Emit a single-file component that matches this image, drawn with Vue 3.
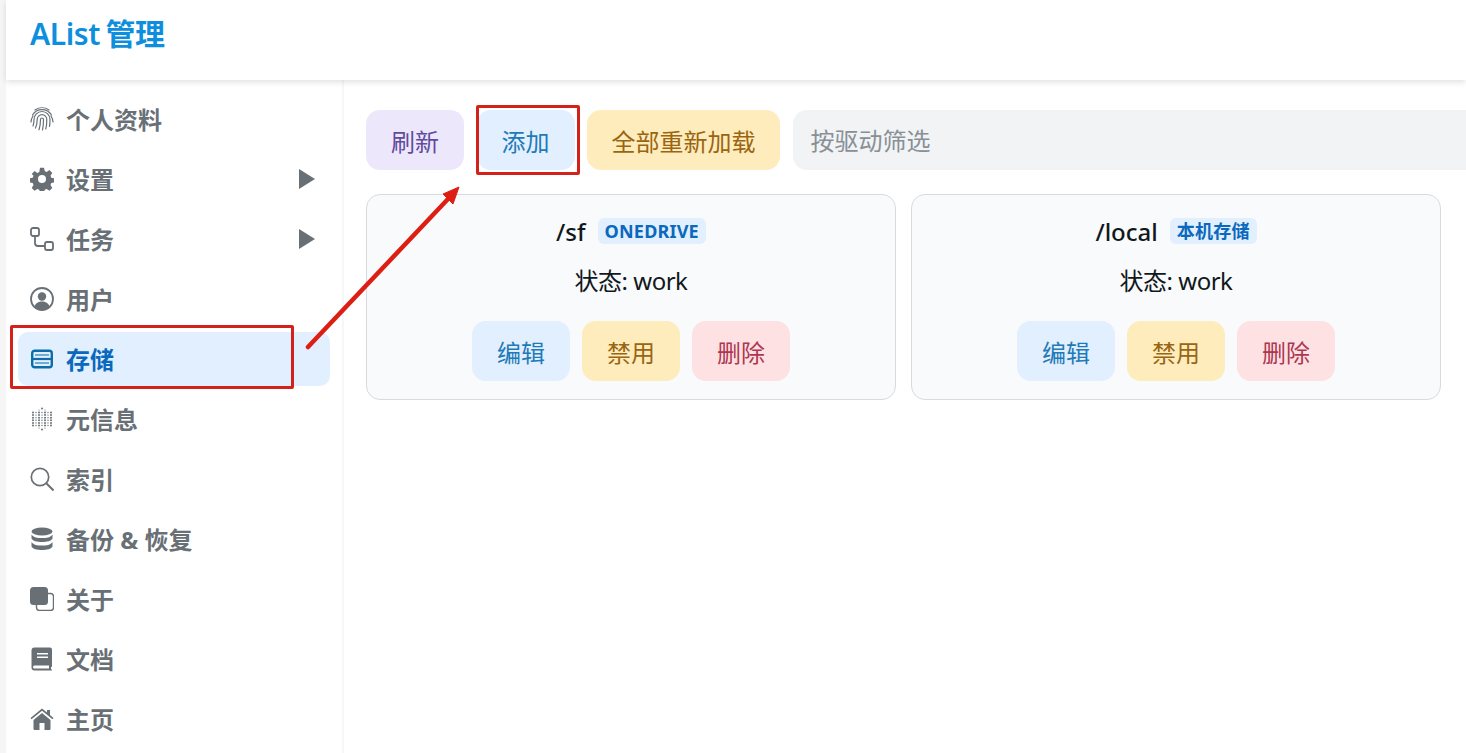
<script setup>
const menu = [
  { key: 'finger', label: '个人资料' },
  { key: 'gear', label: '设置', arrow: true },
  { key: 'route', label: '任务', arrow: true },
  { key: 'user', label: '用户' },
  { key: 'storage', label: '存储', active: true },
  { key: 'meta', label: '元信息' },
  { key: 'search', label: '索引' },
  { key: 'db', label: '备份 & 恢复' },
  { key: 'copy', label: '关于' },
  { key: 'book', label: '文档' },
  { key: 'home', label: '主页' }
]
const cards = [
  { path: '/sf', tag: 'ONEDRIVE' },
  { path: '/local', tag: '本机存储' }
]
const dots = []
for (let x = 0; x < 7; x++) {
  for (let y = 0; y < 6; y++) {
    dots.push({ x: 3 + x * 3, y: 5.5 + y * 2.6, r: x % 2 ? 0.7 : 1 })
  }
}
dots.push({ x: 12, y: 1.5, r: 1 }, { x: 12, y: 22.5, r: 1 }, { x: 9, y: 3, r: 0.6 }, { x: 15, y: 3, r: 0.6 }, { x: 9, y: 21, r: 0.6 }, { x: 15, y: 21, r: 0.6 })
</script>

<template>
  <div class="page">
    <header class="top">
      <h1 class="brand">AList 管理</h1>
    </header>
    <div class="body">
      <nav class="side">
        <a v-for="m in menu" :key="m.key" class="item" :class="{ active: m.active }">
          <svg class="ico" viewBox="0 0 24 24">
            <g v-if="m.key === 'finger'" fill="none" stroke="currentColor" stroke-width="1.2" stroke-linecap="round">
              <path d="M5 3a12 12 0 0 1 14 0" />
              <path d="M2.500 8a11 11 0 0 1 19 0" />
              <path d="M1 15a12 12 0 0 1 2-6M23 15a12 12 0 0 0-2-6" />
              <path d="M3 19c.8-2 1-4 1-6.500a8 8 0 0 1 16 0c0 2.500 0 4.500-.5 7" />
              <path d="M5.500 21c1-2 1.700-5 1.700-8.500a4.800 4.800 0 0 1 9.600 0c0 3.500-.2 6.500-1 9.500" />
              <path d="M9 22.800c1-3 1.500-6.300 1.500-10.300a1.500 1.500 0 0 1 3 0c0 3.500-.3 7-1 10.500" />
            </g>
            <path v-else-if="m.key === 'gear'" fill="currentColor" fill-rule="evenodd" d="M10 .8h4l.7 3.300 1.900.8 2.900-1.800 2.800 2.800-1.800 2.900.8 1.900 3 .7v4l-3 .7-.8 1.900 1.800 2.900-2.800 2.800-2.900-1.800-1.900.8-.7 3.300h-4l-.7-3.300-1.900-.8-2.900 1.800-2.800-2.800 1.800-2.900-.8-1.900-3-.7v-4l3-.7.8-1.900L1.700 6.900l2.800-2.800 2.900 1.800 1.900-.8zM12 8a4 4 0 1 0 0 8 4 4 0 0 0 0-8z" />
            <g v-else-if="m.key === 'route'" fill="none" stroke="currentColor" stroke-width="1.800">
              <rect x="1" y="1" width="8" height="8" rx="2" />
              <rect x="15" y="15" width="8" height="8" rx="2" />
              <path d="M5 9v7a3 3 0 0 0 3 3h7" />
            </g>
            <g v-else-if="m.key === 'user'">
              <circle cx="12" cy="12" r="11" fill="none" stroke="currentColor" stroke-width="1.800" />
              <circle cx="12" cy="9.500" r="4.200" fill="currentColor" />
              <path fill="currentColor" d="M4.500 19.500c1-3.500 4-5 7.500-5s6.500 1.500 7.500 5a10 10 0 0 1-15 0z" />
            </g>
            <g v-else-if="m.key === 'storage'" fill="none" stroke="currentColor">
              <rect x="2.200" y="3.700" width="19.600" height="16.600" rx="2.500" stroke-width="2.400" />
              <path d="M2 12h20" stroke-width="2.200" />
              <path d="M5 8h14M5 16h14" stroke-width="1.300" opacity="0.7" />
            </g>
            <g v-else-if="m.key === 'meta'" fill="currentColor">
              <circle v-for="(d, i) in dots" :key="i" :cx="d.x" :cy="d.y" :r="d.r" />
            </g>
            <g v-else-if="m.key === 'search'" fill="none" stroke="currentColor" stroke-width="1.700">
              <circle cx="10" cy="10" r="8.700" />
              <path d="M16.500 16.500l7 7" stroke-width="2" />
            </g>
            <g v-else-if="m.key === 'db'" fill="currentColor">
              <ellipse cx="12" cy="4.500" rx="10.500" ry="4" />
              <path d="M1.500 7.500c2 3 6 3.500 10.500 3.500s8.500-.5 10.500-3.500v4c-1 2.500-5.500 3.500-10.500 3.500S2.500 14 1.500 11.500z" />
              <path d="M1.500 15c2 3 6 3.500 10.500 3.500s8.500-.5 10.500-3.500v4.500c-1 2.500-5.500 3.500-10.500 3.500s-9.500-1-10.500-3.500z" />
            </g>
            <g v-else-if="m.key === 'copy'">
              <rect x="6.500" y="6.500" width="17" height="17" rx="3" fill="none" stroke="currentColor" stroke-width="1.400" />
              <rect x="0" y="0" width="18" height="18" rx="3.500" fill="currentColor" />
            </g>
            <path v-else-if="m.key === 'book'" fill="currentColor" fill-rule="evenodd" d="M4.500 0.500H20a2 2 0 0 1 2 2V19a1.500 1.500 0 0 1-1 1.400V22a1.500 1.500 0 0 1 1 1.500H4.500A3 3 0 0 1 1.500 20.500v-17a3 3 0 0 1 3-3zM7 6v1.500h11V6zM7 9.500V11h11V9.500zM4.500 18.500a1.500 1.500 0 0 0 0 3H19v-3z" />
            <g v-else-if="m.key === 'home'" fill="currentColor">
              <path d="M12 6l8.500 7v9a1 1 0 0 1-1 1h-5v-7h-5v7h-5a1 1 0 0 1-1-1v-9z" />
              <path d="M12 1.500l5 4V3h3v5l3.500 3-1 1.300L12 3.800 1.500 12.300l-1-1.300z" />
            </g>
          </svg>
          <span class="label">{{ m.label }}</span>
          <svg v-if="m.arrow" class="caret" viewBox="0 0 16 20"><path fill="currentColor" d="M0 0l16 10L0 20z" /></svg>
        </a>
      </nav>
      <main class="main">
        <div class="toolbar">
          <button class="btn purple">刷新</button>
          <button class="btn blue">添加</button>
          <button class="btn amber wide">全部重新加载</button>
          <input class="filter" placeholder="按驱动筛选" />
        </div>
        <div class="cards">
          <section v-for="c in cards" :key="c.path" class="card">
            <div class="title">
              <span class="path">{{ c.path }}</span>
              <span class="tag">{{ c.tag }}</span>
            </div>
            <p class="status">状态: work</p>
            <div class="actions">
              <button class="btn blue">编辑</button>
              <button class="btn amber">禁用</button>
              <button class="btn red">删除</button>
            </div>
          </section>
        </div>
      </main>
    </div>
    <div class="mark mark-side"></div>
    <div class="mark mark-add"></div>
    <svg class="arrow" viewBox="0 0 1466 753" width="1466" height="753">
      <path d="M308 347L448 199" fill="none" stroke="#dd1f13" stroke-width="4.500" stroke-linecap="round" />
      <path d="M459 187L443 194L453 204z" fill="#dd1f13" stroke="#dd1f13" stroke-width="1" />
    </svg>
  </div>
</template>

<style scoped>
.page {
  position: relative;
  width: 1466px;
  height: 753px;
  overflow: hidden;
  box-sizing: border-box;
  padding-left: 6px;
  background: #f6f6f6;
  font-family: "Noto Sans", "Noto Sans CJK SC", sans-serif;
  color: #11181c;
  display: flex;
  flex-direction: column;
}
.top {
  position: relative;
  z-index: 2;
  flex: none;
  height: 80px;
  background: #fff;
  box-shadow: 0 2px 6px rgba(0, 0, 0, 0.13);
  display: flex;
  align-items: center;
  padding-left: 24px;
}
.brand {
  margin: 0 0 12px;
  font-size: 30px;
  font-weight: 600;
  line-height: 44px;
  color: #0d8fdd;
  letter-spacing: -0.4px;
  word-spacing: -2px;
}
.body {
  flex: 1;
  display: flex;
  background: #fff;
  min-height: 0;
}
.side {
  flex: none;
  width: 338px;
  box-sizing: border-box;
  padding: 12px 12px 0 12px;
  border-right: 2px solid #f6f7f8;
  display: flex;
  flex-direction: column;
  gap: 6px;
}
.item {
  flex: none;
  height: 54px;
  border-radius: 10px;
  display: flex;
  align-items: center;
  padding: 0 15px 0 12px;
  color: #687076;
}
.item.active {
  background: #e1effe;
  color: #0a68bd;
}
.ico {
  flex: none;
  width: 24px;
  height: 24px;
  margin-right: 12px;
  margin-top: 0;
}
.item.active .ico {
  color: #0b6ea8;
}
.label {
  flex: 1;
  font-size: 24px;
  font-weight: 700;
  line-height: 34px;
  margin-top: 2px;
}
.caret {
  flex: none;
  width: 16px;
  height: 20px;
  margin-top: -1px;
}
.main {
  flex: 1;
  min-width: 0;
  padding: 30px 0 0 22px;
}
.toolbar {
  display: flex;
  gap: 12.5px;
  height: 60px;
}
.btn {
  flex: none;
  height: 60px;
  min-width: 98px;
  border: 0;
  border-radius: 14px;
  padding: 0 24px;
  font: 400 24px "Noto Sans", "Noto Sans CJK SC", sans-serif;
}
.btn.wide {
  min-width: 193px;
}
.purple { background: #ede7fb; color: #5f4b9c; }
.blue { background: #e1effe; color: #1f7ab8; }
.amber { background: #feecbd; color: #9a6510; }
.red { background: #fde1e3; color: #ad3650; }
.filter {
  flex: 1;
  min-width: 0;
  border: 0;
  outline: 0;
  border-radius: 14px 0 0 14px;
  background: #f1f3f5;
  padding: 0 18px;
  font: 400 24px "Noto Sans", "Noto Sans CJK SC", sans-serif;
  color: #11181c;
}
.filter::placeholder {
  color: #889096;
  opacity: 1;
}
.cards {
  display: flex;
  gap: 15px;
  margin-top: 24px;
}
.card {
  flex: none;
  width: 530px;
  height: 206px;
  box-sizing: border-box;
  background: #f9fafb;
  border: 1px solid #d7dbdf;
  border-radius: 14px;
  padding: 22px 0 0;
  display: flex;
  flex-direction: column;
  align-items: center;
}
.title {
  display: flex;
  align-items: center;
  gap: 12px;
  height: 30px;
}
.path {
  font-size: 24px;
  font-weight: 500;
  line-height: 30px;
  color: #11181c;
}
.tag {
  height: 26px;
  line-height: 26px;
  padding: 0 7px;
  border-radius: 6px;
  background: #e1effe;
  color: #0a68bd;
  font-size: 18px;
  font-weight: 700;
  letter-spacing: 0.2px;
  margin-top: -2px;
}
.status {
  margin: 18px 0 0;
  font-size: 24px;
  line-height: 32px;
  letter-spacing: -0.5px;
}
.actions {
  display: flex;
  gap: 12px;
  margin-top: 24px;
}
.mark {
  position: absolute;
  box-sizing: border-box;
  border: 3px solid #d3221a;
  border-radius: 2px;
  z-index: 3;
}
.mark-side {
  left: 10px;
  top: 325px;
  width: 284px;
  height: 64px;
}
.mark-add {
  left: 476px;
  top: 105px;
  width: 104px;
  height: 70px;
}
.arrow {
  position: absolute;
  left: 0;
  top: 0;
  z-index: 3;
  pointer-events: none;
}
</style>
